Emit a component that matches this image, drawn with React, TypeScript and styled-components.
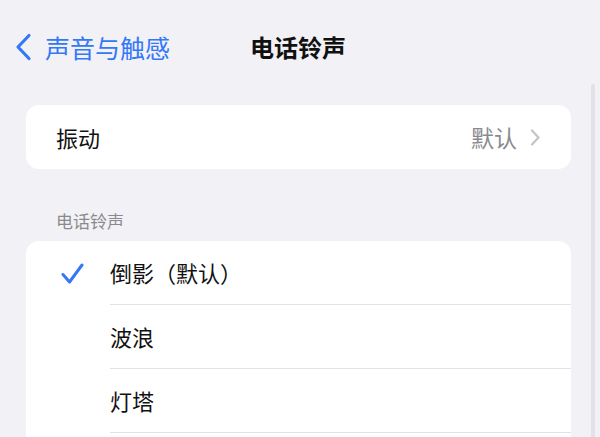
import React from "react";
import styled, { createGlobalStyle } from "styled-components";

const GlobalStyle = createGlobalStyle`
  html, body {
    margin: 0;
    padding: 0;
    background: #f2f1f6;
  }
  body {
    font-family: "Noto Sans CJK SC", "Noto Sans", sans-serif;
    color: #000;
    -webkit-font-smoothing: antialiased;
  }
`;

const Screen = styled.div`
  position: relative;
  width: 600px;
  height: 437px;
  overflow: hidden;
  background: #f2f1f6;
`;

const NavBar = styled.header`
  display: grid;
  grid-template-columns: 1fr auto 1fr;
  align-items: center;
  height: 94px;
  padding: 0 19px 0 15px;
  box-sizing: border-box;
`;

const BackButton = styled.div`
  display: flex;
  align-items: center;
  gap: 13px;
  color: #3478f6;
  font-size: 25px;
  line-height: 1;
`;

const Title = styled.h1`
  margin: 0;
  font-size: 24px;
  font-weight: 600;
  line-height: 1;
  color: #111;
`;

const Content = styled.main`
  display: flex;
  flex-direction: column;
  padding: 11px 29px 0 26px;
`;

const Card = styled.section`
  background: #fff;
  border-radius: 13px;
  overflow: hidden;
`;

const SettingRow = styled.div`
  display: flex;
  align-items: center;
  justify-content: space-between;
  height: 64px;
  padding: 0 31px 0 30px;
`;

const Label = styled.span`
  font-size: 22px;
  line-height: 1;
  color: #111;
`;

const Accessory = styled.span`
  display: flex;
  align-items: center;
  gap: 13px;
  font-size: 23px;
  line-height: 1;
  color: #8a8a8e;
`;

const SectionHeader = styled.div`
  margin: 42px 0 10px 30px;
  font-size: 17px;
  line-height: 20px;
  color: #8a8a8e;
`;

const OptionRow = styled.div`
  display: flex;
  align-items: stretch;
  height: 64px;
`;

const CheckSlot = styled.div`
  width: 84px;
  flex: none;
  display: flex;
  align-items: center;
  padding-left: 35px;
  box-sizing: border-box;
`;

const OptionBody = styled.div`
  flex: 1;
  display: flex;
  align-items: center;
  border-bottom: 1px solid #e1e1e6;
  font-size: 22px;
  line-height: 1;
  color: #111;
  padding-bottom: 1px;
`;

const ScrollIndicator = styled.div`
  position: absolute;
  top: 84px;
  right: 5px;
  width: 4px;
  height: 400px;
  border-radius: 3px;
  background: #e2e1e7;
`;

const BackChevron = () => (
  <svg width="17" height="28" viewBox="0 0 17 28" fill="none">
    <path d="M14 2.5 L3 14 L14 25.5" stroke="#3478f6" strokeWidth="3.2" strokeLinecap="round" strokeLinejoin="round" />
  </svg>
);

const RightChevron = () => (
  <svg width="10" height="17" viewBox="0 0 10 17" fill="none">
    <path d="M2 1.5 L8.5 8.5 L2 15.5" stroke="#c4c4c7" strokeWidth="2.2" strokeLinecap="round" strokeLinejoin="round" />
  </svg>
);

const Check = () => (
  <svg width="23" height="21" viewBox="0 0 23 21" fill="none">
    <path d="M2 11.5 L8.5 19 L21 2" stroke="#3478f6" strokeWidth="3" strokeLinecap="round" strokeLinejoin="round" />
  </svg>
);

const tones = [
  { name: "倒影（默认）", selected: true },
  { name: "波浪", selected: false },
  { name: "灯塔", selected: false },
];

export default function App() {
  return (
    <Screen>
      <GlobalStyle />
      <NavBar>
        <BackButton>
          <BackChevron />
          <span>声音与触感</span>
        </BackButton>
        <Title>电话铃声</Title>
        <div />
      </NavBar>
      <Content>
        <Card>
          <SettingRow>
            <Label>振动</Label>
            <Accessory>
              默认
              <RightChevron />
            </Accessory>
          </SettingRow>
        </Card>
        <SectionHeader>电话铃声</SectionHeader>
        <Card>
          {tones.map((t) => (
            <OptionRow key={t.name}>
              <CheckSlot>{t.selected && <Check />}</CheckSlot>
              <OptionBody>{t.name}</OptionBody>
            </OptionRow>
          ))}
          <OptionRow>
            <CheckSlot />
            <OptionBody />
          </OptionRow>
        </Card>
      </Content>
      <ScrollIndicator />
    </Screen>
  );
}
